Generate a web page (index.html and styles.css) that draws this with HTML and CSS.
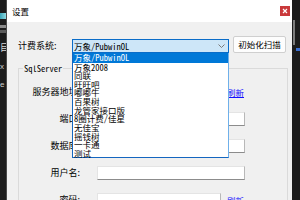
FILE: index.html
```html
<!DOCTYPE html>
<html lang="zh-CN">
<head>
<meta charset="utf-8">
<title>设置</title>
<link rel="stylesheet" href="styles.css">
</head>
<body>
<div class="screen">
  <div class="desk desk-left">
    <span class="dl-top"></span>
    <span class="dl-cyan"></span>
    <span class="dl-gray"></span>
    <span class="dl-gray2"></span>
    <span class="dl-glyph">目</span>
    <span class="dl-char">x</span>
    <span class="dl-char">e</span>
  </div>
  <div class="window">
    <div class="titlebar">
      <span class="title">设置</span>
      <span class="close"><svg width="6" height="6" viewBox="0 0 6 6"><path d="M1 1L5 5M5 1L1 5" stroke="#fff" stroke-width="1.2"/></svg></span>
    </div>
    <div class="content">
      <div class="top-row">
        <span class="label sys-label">计费系统:</span>
        <div class="combo">
          <span class="combo-text">万象/PubwinOL</span>
          <svg class="arrow" width="7" height="4" viewBox="0 0 7 4"><path d="M0.5 0.5L3.5 3.5L6.5 0.5" fill="none" stroke="#7a7a7a" stroke-width="1"/></svg>
          <ul class="dropdown">
            <li class="selected">万象/PubwinOL</li>
            <li>万象2008</li>
            <li>同联</li>
            <li>旺旺吧</li>
            <li>嘟嘟牛</li>
            <li>百果树</li>
            <li>龙管家接口版</li>
            <li>8圈计费/佳星</li>
            <li>无佳宝</li>
            <li>摇钱树</li>
            <li>一卡通</li>
            <li>测试</li>
          </ul>
        </div>
        <button class="btn">初始化扫描</button>
      </div>
      <fieldset class="group">
        <legend class="legend">SqlServer</legend>
        <div class="field"><span class="flabel">服务器地址:</span><span class="input short"></span><a class="link">刷新</a></div>
        <div class="field"><span class="flabel">端口:</span><span class="input"></span></div>
        <div class="field"><span class="flabel">数据库:</span><span class="input"></span></div>
        <div class="field"><span class="flabel">用户名:</span><span class="input"></span></div>
        <div class="field"><span class="flabel">密码:</span><span class="input short"></span><a class="link">刷新</a></div>
      </fieldset>
    </div>
  </div>
  <div class="desk desk-right">
    <span class="dr-top"></span>
    <span class="dr-bar"></span>
    <span class="dr-blue"></span>
  </div>
</div>
</body>
</html>
```
FILE: styles.css
```css
html, body {
  margin: 0;
  padding: 0;
}
body {
  font-family: "Noto Sans CJK SC", "Liberation Sans", sans-serif;
  color: #000;
}
.screen {
  display: flex;
  width: 300px;
  height: 200px;
  overflow: hidden;
  background: #1c1c1c;
}
.desk-left {
  width: 7px;
  flex: none;
  display: flex;
  flex-direction: column;
  border-right: 1px solid #4a4a4a;
  box-sizing: border-box;
}
.dl-top {
  height: 13px;
}
.dl-cyan {
  height: 6px;
  background: linear-gradient(90deg, #3aa6b8, #8fd8e0);
}
.dl-gray {
  height: 3px;
  margin-top: 6px;
  background: #8a8a8a;
}
.dl-gray2 {
  height: 3px;
  margin-top: 2px;
  background: #5c5c5c;
}
.dl-glyph {
  margin-top: 10px;
  height: 10px;
  font-size: 9px;
  line-height: 10px;
  color: #d8d8d8;
  overflow: hidden;
}
.dl-char {
  margin-top: 10px;
  height: 8px;
  font: 8px/8px "Liberation Sans", sans-serif;
  color: #cfcfcf;
  overflow: hidden;
}
.window {
  width: 285px;
  flex: none;
  background: #f0f0f0;
  display: flex;
  flex-direction: column;
}
.titlebar {
  height: 22px;
  background: #fff;
  display: flex;
  align-items: center;
  padding: 0 2px 0 5px;
  flex: none;
}
.title {
  flex: 1;
  font-size: 8.5px;
  line-height: 10px;
}
.close {
  width: 10px;
  height: 10px;
  background: #c9393b;
  display: flex;
  align-items: center;
  justify-content: center;
}
.content {
  padding: 14px 5px 0 11px;
}
.top-row {
  display: flex;
  align-items: flex-end;
  height: 17px;
}
.label {
  font-size: 9px;
  line-height: 14px;
}
.sys-label {
  width: 54px;
  flex: none;
}
.combo {
  position: relative;
  width: 157px;
  height: 14px;
  box-sizing: border-box;
  border: 1px solid #0a6cc8;
  background: #cde6f8;
  display: flex;
  align-items: center;
  padding-left: 1px;
  flex: none;
}
.combo-text,
.dropdown li,
.legend {
  font-family: "Noto Sans Mono CJK SC", "Liberation Mono", "Noto Sans CJK SC", monospace;
}
.combo-text {
  flex: 1;
  font-size: 8.5px;
  line-height: 12px;
  white-space: nowrap;
}
.arrow {
  margin-right: 3px;
}
.dropdown {
  position: absolute;
  top: 13px;
  left: -1px;
  width: 157px;
  height: 105px;
  box-sizing: border-box;
  margin: 0;
  padding: 0;
  list-style: none;
  background: #fff;
  border: 1px solid #1466c0;
  border-top: none;
  border-right-color: #6fb0ea;
  z-index: 2;
}
.dropdown li {
  height: 8.66px;
  line-height: 8.66px;
  font-size: 8.5px;
  padding-left: 1px;
  white-space: nowrap;
}
.dropdown li.selected {
  background: #0078d7;
  color: #fff;
  height: 9.5px;
  line-height: 9.5px;
}
.btn {
  width: 53px;
  height: 17px;
  margin: 0 0 0 4px;
  padding: 0;
  box-sizing: border-box;
  border: 1px solid #cfcfcf;
  border-radius: 2px;
  background: #fdfdfd;
  font-family: "Noto Sans CJK SC", sans-serif;
  font-size: 8.5px;
  line-height: 15px;
  color: #000;
  flex: none;
}
.group {
  margin: 10px 0 0;
  padding: 12px 0 20px;
  width: 270px;
  box-sizing: border-box;
  border: 1px solid #dadada;
  min-width: 0;
}
.legend {
  margin-left: 4px;
  padding: 0 1px;
  font-size: 8.5px;
  line-height: 10px;
}
.field {
  display: flex;
  align-items: center;
  height: 14px;
  margin-bottom: 13px;
}
.flabel {
  width: 61px;
  flex: none;
  text-align: right;
  font-size: 9px;
  line-height: 14px;
  white-space: nowrap;
}
.input {
  margin-left: 17px;
  width: 148px;
  height: 14px;
  box-sizing: border-box;
  background: #fff;
  border: 1px solid #e4e4e4;
  border-right-color: #b8b8b8;
  border-bottom-color: #8c8c8c;
  flex: none;
}
.input.short {
  width: 124px;
}
.link {
  margin-left: 6px;
  font-size: 8.5px;
  line-height: 12px;
  color: #1010ff;
  text-decoration: underline;
}
.desk-right {
  flex: 1;
  display: flex;
  flex-direction: column;
}
.dr-top {
  height: 20px;
}
.dr-bar {
  width: 2px;
  height: 25px;
  margin-left: 1px;
  background: #7c7c7c;
}
.dr-blue {
  width: 4px;
  height: 3px;
  margin: 3px 0 0 4px;
  background: #3b6fd0;
}
```
